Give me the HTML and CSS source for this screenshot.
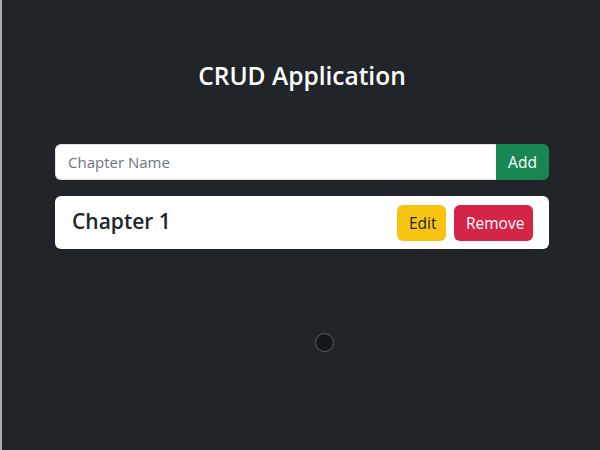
FILE: index.html
```html
<!DOCTYPE html>
<html>
<head>
<meta charset="utf-8">
<link rel="stylesheet" href="styles.css">
</head>
<body>
<main class="app">
  <h1 class="title">CRUD Application</h1>
  <div class="container">
    <form class="add-form">
      <input class="name-input" type="text" placeholder="Chapter Name">
      <button class="btn btn-add" type="button">Add</button>
    </form>
    <ul class="list">
      <li class="item">
        <span class="item-name">Chapter 1</span>
        <div class="actions">
          <button class="btn btn-edit" type="button">Edit</button>
          <button class="btn btn-remove" type="button">Remove</button>
        </div>
      </li>
    </ul>
  </div>
  <div class="cursor"></div>
</main>
</body>
</html>
```
FILE: styles.css
```css
html, body {
  margin: 0;
  height: 100%;
}
body {
  background: #212529;
  border-left: 2px solid #a9aeb3;
  box-sizing: border-box;
  font-family: "Open Sans", "Noto Sans", sans-serif;
  color: #fff;
}
.app {
  position: relative;
  height: 100%;
  padding-top: 58px;
  box-sizing: border-box;
}
.title {
  margin: 0;
  text-align: center;
  font-size: 24.5px;
  font-weight: 600;
  line-height: 36px;
  padding-left: 2px;
}
.container {
  width: 494px;
  margin: 50px 0 0 53px;
}
.add-form {
  display: flex;
  height: 36px;
  margin: 0;
}
.name-input {
  flex: 1;
  min-width: 0;
  border: 1px solid #dee2e6;
  border-right: none;
  border-radius: 6px 0 0 6px;
  padding: 0 12px;
  font-family: inherit;
  font-size: 15px;
  color: #212529;
  background: #fff;
  outline: none;
}
.name-input::placeholder {
  color: #6c757d;
}
.btn {
  border: none;
  font-family: inherit;
  font-size: 15.5px;
  height: 36px;
  padding: 0 12px;
  border-radius: 6px;
  cursor: pointer;
}
.btn-add {
  width: 53px;
  background: #198754;
  color: #fff;
  border-radius: 0 6px 6px 0;
}
.list {
  list-style: none;
  margin: 16px 0 0;
  padding: 0;
}
.item {
  display: flex;
  align-items: center;
  justify-content: space-between;
  background: #fff;
  border-radius: 6px;
  height: 53px;
  padding: 0 16px 0 17px;
}
.item-name {
  color: #212529;
  font-size: 21px;
  font-weight: 600;
  padding-bottom: 4px;
}
.actions {
  display: flex;
  gap: 8px;
}
.btn-edit {
  width: 49px;
  background: #f7c511;
  color: #212529;
}
.btn-remove {
  width: 79px;
  background: #d42447;
  color: #fff;
}
.cursor {
  position: absolute;
  left: 313px;
  top: 333px;
  width: 17px;
  height: 17px;
  border-radius: 50%;
  background: #15181b;
  border: 1.5px solid #5a5d61;
}
```
